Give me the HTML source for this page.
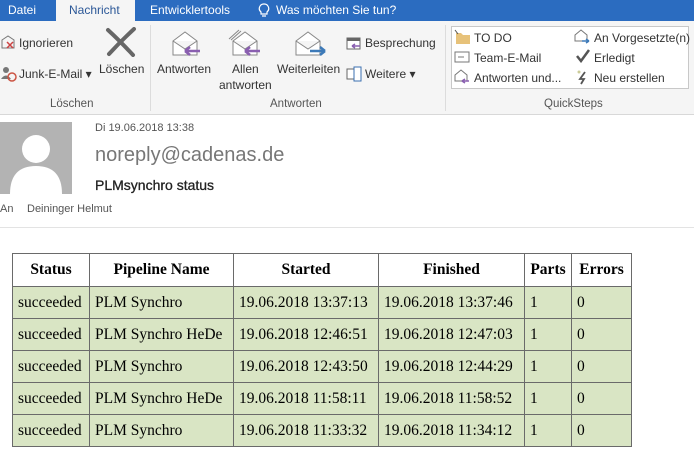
<!DOCTYPE html>
<html><head><meta charset="utf-8"><style>
*{margin:0;padding:0;box-sizing:border-box}
body{width:694px;height:451px;overflow:hidden;background:#fff;font-family:"Segoe UI","Liberation Sans",sans-serif;position:relative;color:#444}
.a{position:absolute;white-space:nowrap}
.tabs{position:absolute;left:0;top:0;width:694px;height:21px;background:#2b6cc0;color:#fff;font-size:12px}
.ribbon{position:absolute;left:0;top:21px;width:694px;height:94px;background:#f5f5f5;border-bottom:1px solid #d8d8d8;font-size:12px;color:#333}
.sep{position:absolute;top:4px;width:1px;height:86px;background:#dcdcdc}
.gl{font-size:11.5px;color:#555}
table{position:absolute;left:12px;top:253px;border-collapse:collapse;font-family:"Liberation Serif",serif;font-size:15.5px;color:#000}
td,th{border:1px solid #6a6a6a;padding:0 5px;height:32px;text-align:left;white-space:nowrap}
th{background:#fff;text-align:center;font-weight:bold;height:33px}
td{background:#d9e5c4}
</style></head><body>
<div class="tabs">
<span class="a" style="left:8px;top:3px">Datei</span>
<div class="a" style="left:56px;top:0;width:79px;height:22px;background:#f5f5f5;color:#2b5797;padding:3px 0 0 13px">Nachricht</div>
<span class="a" style="left:150px;top:3px">Entwicklertools</span>
<svg class="a" style="left:258px;top:3px" width="12" height="15"><path d="M6 1 A4.5 4.5 0 0 1 9 9 V11 H3 V9 A4.5 4.5 0 0 1 6 1Z M4 13 H8" fill="none" stroke="#fff" stroke-width="1.2"/></svg>
<span class="a" style="left:276px;top:3px">Was möchten Sie tun?</span>
</div>
<div class="ribbon">
<svg class="a" style="left:0;top:13px" width="18" height="16"><path d="M2 6 L8 2 L14 6 V14 H2Z" fill="none" stroke="#777"/><path d="M7 8 L13 14 M13 8 L7 14" stroke="#c44" stroke-width="1.5"/></svg>
<span class="a" style="left:19px;top:15px">Ignorieren</span>
<svg class="a" style="left:0;top:44px" width="18" height="18"><circle cx="6" cy="5" r="3" fill="#777"/><path d="M1 14 Q6 7 11 14Z" fill="#777"/><circle cx="12" cy="12" r="4" fill="none" stroke="#c54" stroke-width="1.5"/></svg>
<span class="a" style="left:19px;top:46px">Junk-E-Mail ▾</span>
<svg class="a" style="left:105px;top:6px" width="32" height="30"><path d="M3 3 Q15 14 28 28 M29 2 Q16 14 4 27" stroke="#666" stroke-width="4" fill="none" stroke-linecap="round"/></svg>
<span class="a" style="left:99px;top:41px">Löschen</span>
<span class="a gl" style="left:50px;top:77px">Löschen</span>
<div class="sep" style="left:150px"></div>
<svg class="a" style="left:171px;top:8px" width="32" height="30"><path d="M2 12 L14 3 L26 12 V26 H2Z M2 12 L14 20 L26 12" fill="#fff" stroke="#888"/><path d="M14 22 H29 M14 22 l5 -4 M14 22 l5 4" stroke="#8a5fb0" stroke-width="2.5" fill="none"/></svg>
<span class="a" style="left:157px;top:41px">Antworten</span>
<svg class="a" style="left:227px;top:6px" width="36" height="32"><path d="M2 12 L12 3 M4 13 L14 4" stroke="#888" fill="none"/><path d="M6 14 L18 5 L30 14 V28 H6Z M6 14 L18 22 L30 14" fill="#fff" stroke="#888"/><path d="M18 24 H33 M18 24 l5 -4 M18 24 l5 4" stroke="#8a5fb0" stroke-width="2.5" fill="none"/></svg>
<span class="a" style="left:232px;top:41px">Allen</span>
<span class="a" style="left:219px;top:57px">antworten</span>
<svg class="a" style="left:294px;top:8px" width="34" height="30"><path d="M2 12 L14 3 L26 12 V26 H2Z M2 12 L14 20 L26 12" fill="#fff" stroke="#888"/><path d="M16 22 H31 M31 22 l-5 -4 M31 22 l-5 4" stroke="#3d7ab8" stroke-width="2.5" fill="none"/></svg>
<span class="a" style="left:277px;top:41px">Weiterleiten</span>
<svg class="a" style="left:346px;top:15px" width="16" height="14"><rect x="1" y="2" width="13" height="11" fill="#fff" stroke="#666"/><rect x="1" y="2" width="13" height="3" fill="#666"/><path d="M6 10 H14 M6 10 l3 -2 M6 10 l3 2" stroke="#8a5fb0" stroke-width="1.5" fill="none"/></svg>
<span class="a" style="left:365px;top:15px">Besprechung</span>
<svg class="a" style="left:346px;top:45px" width="16" height="16"><rect x="1" y="3" width="10" height="10" fill="#fff" stroke="#666"/><rect x="8" y="1" width="7" height="14" fill="#fff" stroke="#3a6fb0"/></svg>
<span class="a" style="left:365px;top:46px">Weitere ▾</span>
<span class="a gl" style="left:270px;top:77px">Antworten</span>
<div class="sep" style="left:445px"></div>
<div class="a" style="left:451px;top:5px;width:238px;height:63px;border:1px solid #c8c8c8;background:#fff"></div>
<svg class="a" style="left:454px;top:8px" width="18" height="16"><path d="M2 4 H7 L9 6 H16 V15 H2Z" fill="#e7c27a"/><path d="M1 1 L4 5" stroke="#555"/></svg>
<span class="a" style="left:474px;top:10px">TO DO</span>
<svg class="a" style="left:454px;top:29px" width="18" height="14"><rect x="1" y="2" width="14" height="10" fill="none" stroke="#777"/><path d="M4 7 H10" stroke="#777"/></svg>
<span class="a" style="left:474px;top:30px">Team-E-Mail</span>
<svg class="a" style="left:454px;top:48px" width="18" height="16"><path d="M1 6 L7 1 L13 6 V12 H1Z" fill="none" stroke="#777"/><path d="M8 12 H15 M8 12 l3 -2 M8 12 l3 2" stroke="#8a5fb0" stroke-width="1.5" fill="none"/></svg>
<span class="a" style="left:474px;top:50px">Antworten und...</span>
<svg class="a" style="left:574px;top:8px" width="18" height="16"><path d="M1 6 L7 1 L13 6 V12 H1Z" fill="none" stroke="#777"/><path d="M8 12 H15 M15 12 l-3 -2 M15 12 l-3 2" stroke="#3d7ab8" stroke-width="1.5" fill="none"/></svg>
<span class="a" style="left:594px;top:10px">An Vorgesetzte(n)</span>
<svg class="a" style="left:575px;top:28px" width="16" height="14"><path d="M2 7 L6 12 L14 1" stroke="#555" stroke-width="2.5" fill="none"/></svg>
<span class="a" style="left:594px;top:30px">Erledigt</span>
<svg class="a" style="left:575px;top:48px" width="16" height="16"><path d="M10 3 L5 10 H9 L6 15" stroke="#555" stroke-width="1.8" fill="none"/><circle cx="4" cy="3" r="1.5" fill="#cc9"/></svg>
<span class="a" style="left:594px;top:50px">Neu erstellen</span>
<span class="a gl" style="left:544px;top:77px">QuickSteps</span>
</div>
<div class="a" style="left:0;top:122px;width:72px;height:72px;background:#b3b3b3;overflow:hidden">
<svg width="72" height="72"><circle cx="36" cy="27" r="14" fill="#fff"/><path d="M10 72 Q10 44 36 44 Q62 44 62 72Z" fill="#fff"/></svg>
</div>
<span class="a" style="left:95px;top:122px;font-size:11px;color:#555">Di 19.06.2018 13:38</span>
<span class="a" style="left:95px;top:144px;font-size:20px;color:#777;font-weight:300">noreply@cadenas.de</span>
<span class="a" style="left:95px;top:177px;font-size:14px;color:#222;-webkit-text-stroke:0.3px #222">PLMsynchro status</span>
<span class="a" style="left:0;top:203px;font-size:11px;color:#555">An</span>
<span class="a" style="left:27px;top:203px;font-size:11px;color:#555">Deininger Helmut</span>
<div class="a" style="left:0;top:227px;width:694px;height:1px;background:#e3e3e3"></div>
<table>
<tr><th style="width:77px">Status</th><th style="width:144px">Pipeline Name</th><th style="width:145px">Started</th><th style="width:146px">Finished</th><th style="width:47px">Parts</th><th style="width:60px">Errors</th></tr>
<tr><td>succeeded</td><td>PLM Synchro</td><td>19.06.2018 13:37:13</td><td>19.06.2018 13:37:46</td><td>1</td><td>0</td></tr>
<tr><td>succeeded</td><td>PLM Synchro HeDe</td><td>19.06.2018 12:46:51</td><td>19.06.2018 12:47:03</td><td>1</td><td>0</td></tr>
<tr><td>succeeded</td><td>PLM Synchro</td><td>19.06.2018 12:43:50</td><td>19.06.2018 12:44:29</td><td>1</td><td>0</td></tr>
<tr><td>succeeded</td><td>PLM Synchro HeDe</td><td>19.06.2018 11:58:11</td><td>19.06.2018 11:58:52</td><td>1</td><td>0</td></tr>
<tr><td>succeeded</td><td>PLM Synchro</td><td>19.06.2018 11:33:32</td><td>19.06.2018 11:34:12</td><td>1</td><td>0</td></tr>
</table>
</body></html>
